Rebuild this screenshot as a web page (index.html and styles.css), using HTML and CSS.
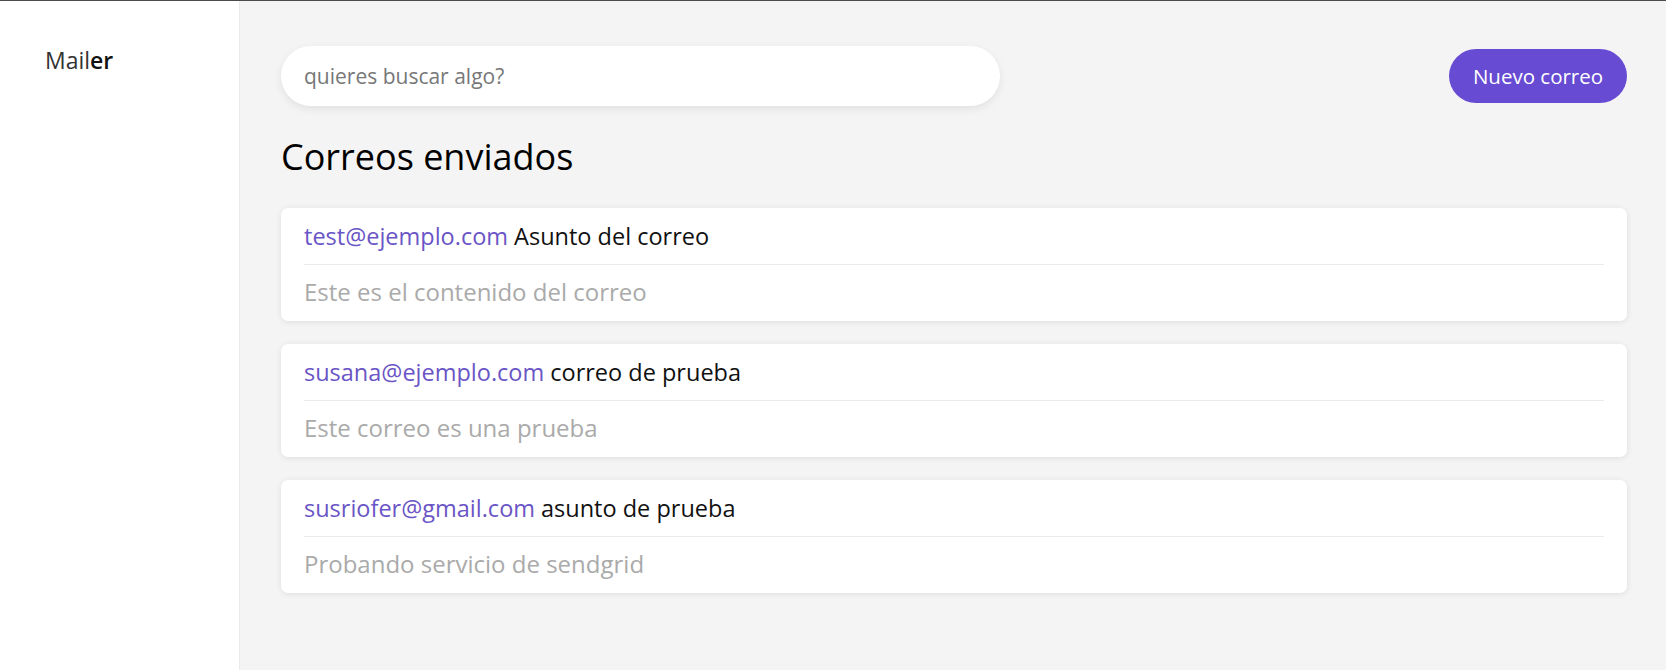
FILE: index.html
```html
<!DOCTYPE html>
<html lang="es">
<head>
<meta charset="utf-8">
<title>Mailer</title>
<link rel="stylesheet" href="styles.css">
</head>
<body>
<div class="app">
  <aside class="sidebar">
    <div class="brand">Mail<b>er</b></div>
  </aside>
  <main class="main">
    <div class="topbar">
      <input class="search" type="text" placeholder="quieres buscar algo?">
      <button class="new-btn">Nuevo correo</button>
    </div>
    <h1 class="title">Correos enviados</h1>
    <div class="list">
      <div class="card">
        <div class="card-head"><span class="to">test@ejemplo.com</span> Asunto del correo</div>
        <div class="card-body">Este es el contenido del correo</div>
      </div>
      <div class="card">
        <div class="card-head"><span class="to">susana@ejemplo.com</span> correo de prueba</div>
        <div class="card-body">Este correo es una prueba</div>
      </div>
      <div class="card">
        <div class="card-head"><span class="to">susriofer@gmail.com</span> asunto de prueba</div>
        <div class="card-body">Probando servicio de sendgrid</div>
      </div>
    </div>
  </main>
</div>
</body>
</html>
```
FILE: styles.css
```css
* { box-sizing: border-box; }
html, body { margin: 0; height: 100%; }
body {
  font-family: "Open Sans", "Lato", sans-serif;
  background: #f4f4f4;
  border-top: 1px solid #4a4a4a;
  color: #222;
}
.app { display: flex; min-height: 669px; }
.sidebar {
  width: 240px;
  flex: none;
  background: #fff;
  border-right: 1px solid #ebebeb;
  padding: 44px 0 0 45px;
}
.brand { font-size: 23px; line-height: 30px; color: #333; }
.brand b { font-weight: 600; color: #111; }
.main { flex: 1; padding: 45px 39px 0 41px; }
.topbar { display: flex; align-items: center; justify-content: space-between; }
.search {
  width: 719px;
  height: 60px;
  border: none;
  border-radius: 30px;
  background: #fff;
  box-shadow: 0 3px 9px rgba(0,0,0,0.08);
  padding: 0 23px;
  font-family: inherit;
  font-size: 21px;
  color: #333;
  outline: none;
}
.search::placeholder { color: #777; }
.new-btn {
  width: 178px;
  height: 54px;
  border: none;
  border-radius: 27px;
  background: #674bd2;
  color: #fff;
  font-family: inherit;
  font-size: 20.5px;
}
.title {
  margin: 28px 0 0;
  font-size: 36px;
  font-weight: 400;
  color: #000;
  line-height: 46px;
}
.list { display: flex; flex-direction: column; gap: 23px; margin-top: 28px; }
.card {
  background: #fff;
  border-radius: 7px;
  box-shadow: 0 1px 6px rgba(0,0,0,0.09);
  padding: 0 23px;
}
.card-head {
  height: 57px;
  display: flex;
  align-items: center;
  gap: 6px;
  font-size: 23.5px;
  color: #111;
  border-bottom: 1px solid #ebebeb;
}
.to { color: #6a55c6; }
.card-body {
  height: 56px;
  padding-bottom: 3px;
  display: flex;
  align-items: center;
  font-size: 24px;
  color: #aaa;
}
```
